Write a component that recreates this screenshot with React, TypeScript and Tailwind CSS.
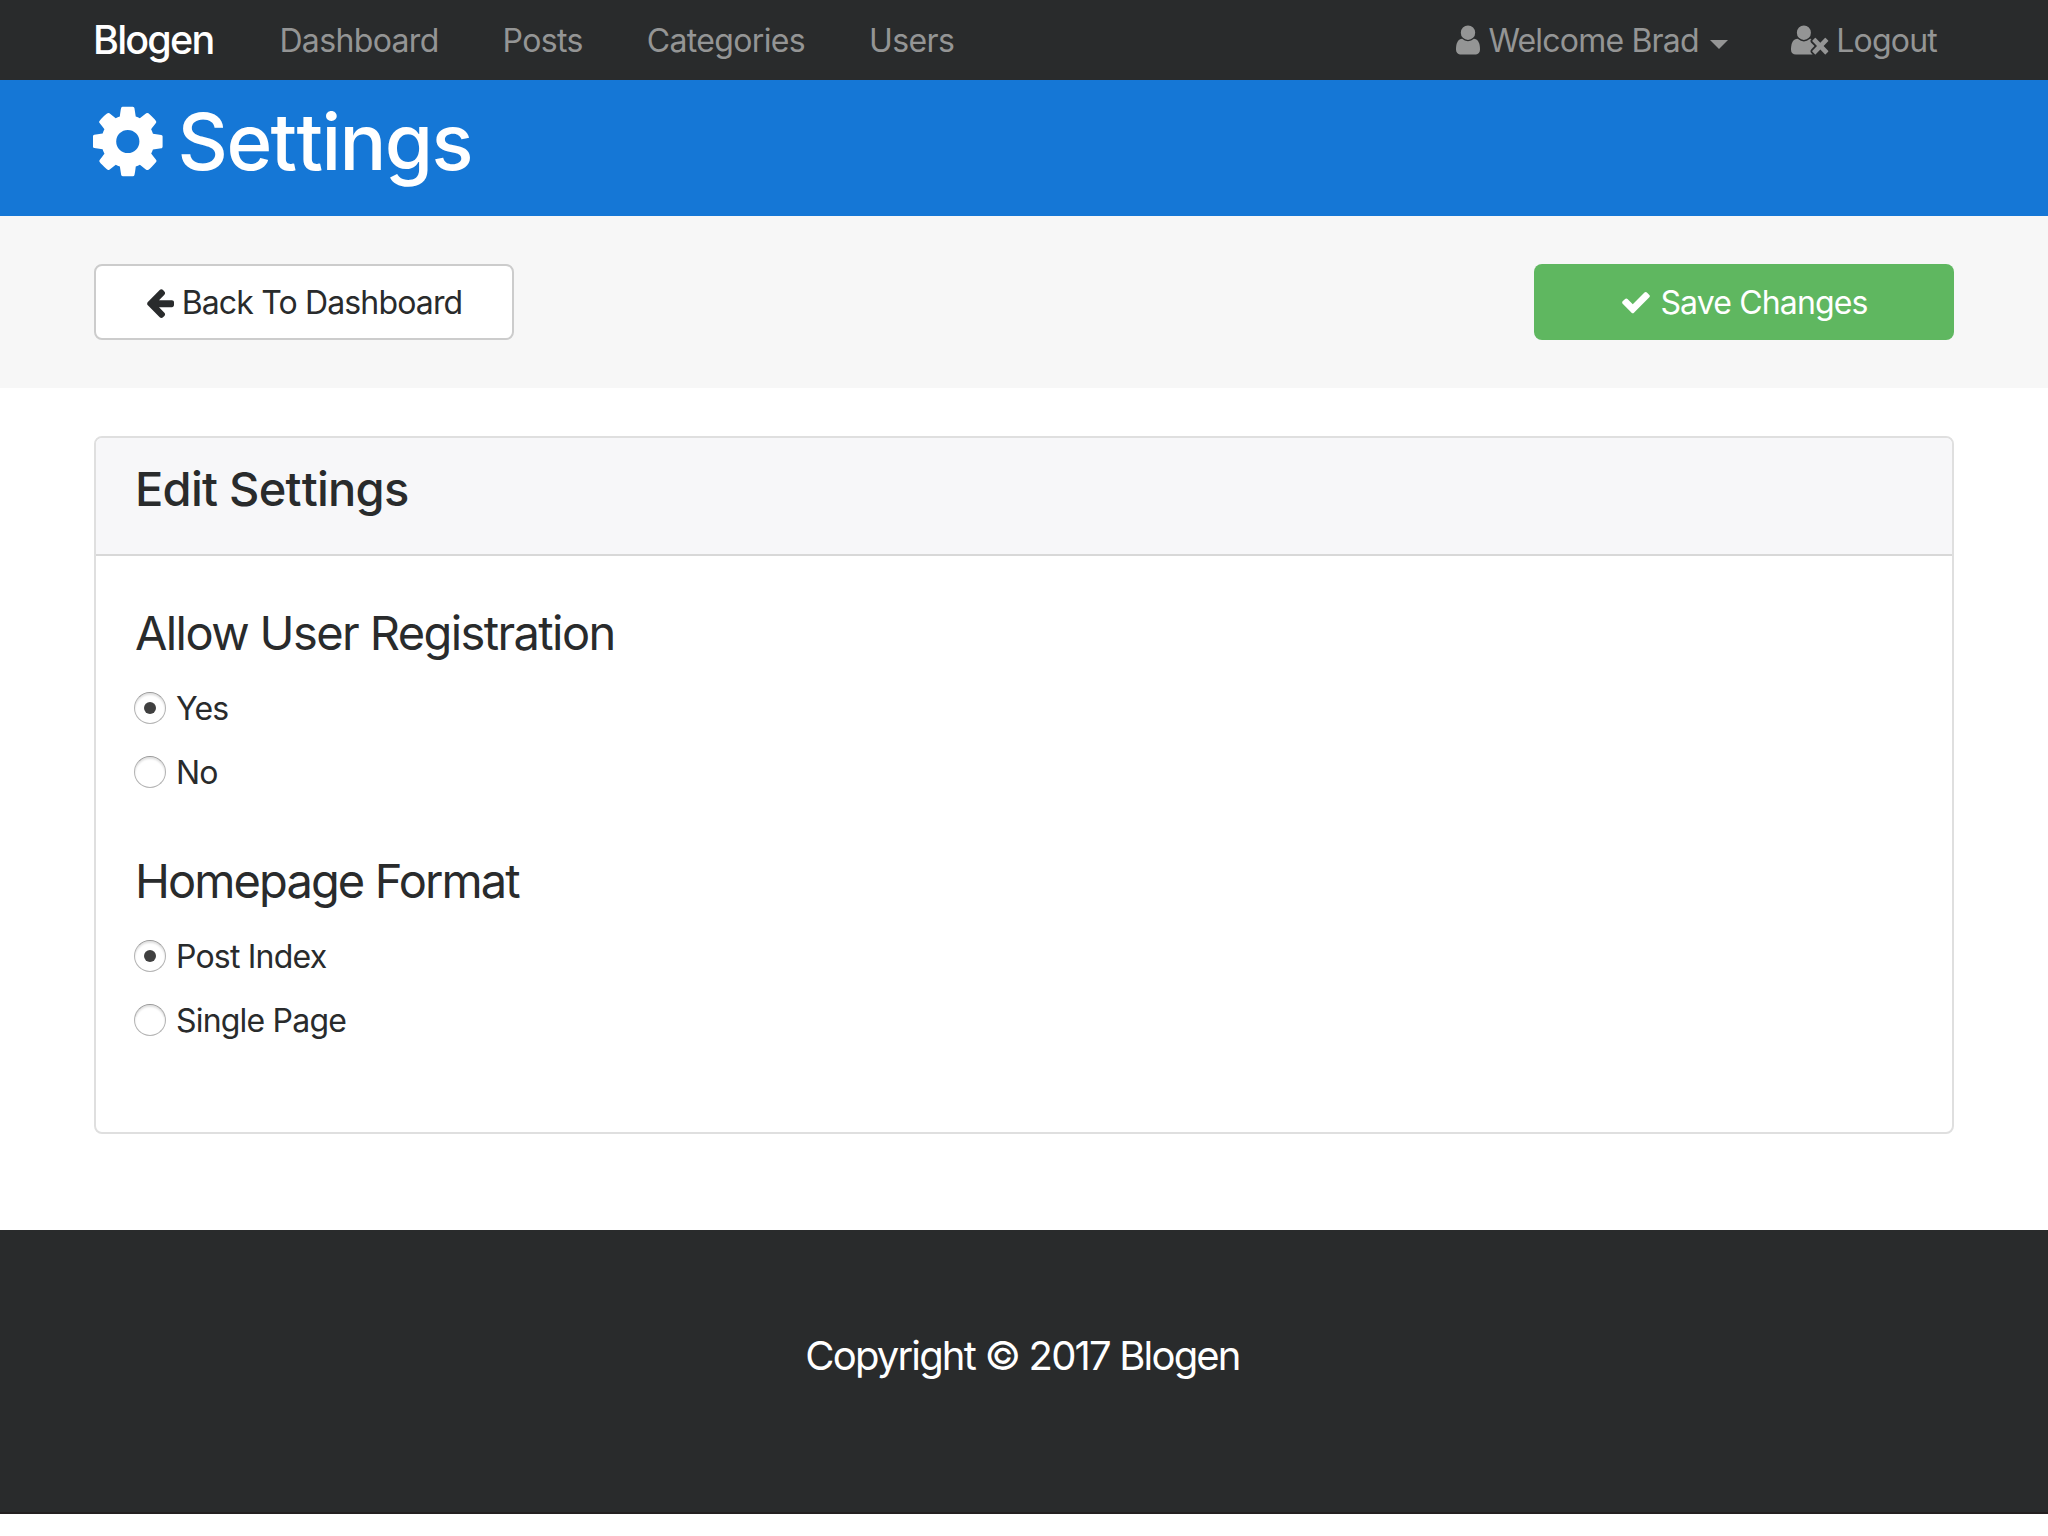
import React, { useState } from "react";

type GlyphProps = { d: string; advance: number; className: string };

/* Icon-font glyph: 1792 units per em, y axis pointing up, baseline at 0. */
function Glyph({ d, advance, className }: GlyphProps) {
  return (
    <svg
      viewBox={`0 -1536 ${advance} 1792`}
      preserveAspectRatio="none"
      fill="currentColor"
      aria-hidden="true"
      className={`inline-block shrink-0 overflow-visible ${className}`}
    >
      <path transform="scale(1 -1)" d={d} />
    </svg>
  );
}

const COG =
  "M1024 640q0 106 -75 181t-181 75t-181 -75t-75 -181t75 -181t181 -75t181 75t75 181zM1536 749v-222q0 -12 -8 -23t-20 -13l-185 -28q-19 -54 -39 -91q35 -50 107 -138q10 -12 10 -25t-9 -23q-27 -37 -99 -108t-94 -71q-12 0 -26 9l-138 108q-44 -23 -91 -38q-16 -136 -29 -186q-7 -28 -36 -28h-222q-14 0 -24.5 8.5t-11.5 21.5l-28 184q-49 16 -90 37l-141 -107q-10 -9 -25 -9q-14 0 -25 11q-126 114 -165 168q-7 10 -7 23q0 12 8 23q15 21 51 66.5t54 70.5q-27 50 -41 99l-183 27q-13 2 -21 12.5t-8 23.5v222q0 12 8 23t19 13l186 28q14 46 39 92q-40 57 -107 138q-10 12 -10 24q0 10 9 23q26 36 98.5 107.5t94.5 71.5q13 0 26 -10l138 -107q44 23 91 38q16 136 29 186q7 28 36 28h222q14 0 24.5 -8.5t11.5 -21.5l28 -184q49 -16 90 -37l142 107q9 9 24 9q13 0 25 -10q129 -119 165 -170q7 -8 7 -22q0 -12 -8 -23q-15 -21 -51 -66.5t-54 -70.5q26 -50 41 -98l183 -28q13 -2 21 -12.5t8 -23.5z";
const USER =
  "M1280 137q0 -109 -62.5 -187t-150.5 -78h-854q-88 0 -150.5 78t-62.5 187q0 85 8.5 160.5t31.5 152t58.5 131t94 89t134.5 34.5q131 -128 313 -128t313 128q76 0 134.5 -34.5t94 -89t58.5 -131t31.5 -152t8.5 -160.5zM1024 1024q0 -159 -112.5 -271.5t-271.5 -112.5t-271.5 112.5t-112.5 271.5t112.5 271.5t271.5 112.5t271.5 -112.5t112.5 -271.5z";
const USER_TIMES =
  "M704 640q-159 0 -271.5 112.5t-112.5 271.5t112.5 271.5t271.5 112.5t271.5 -112.5t112.5 -271.5t-112.5 -271.5t-271.5 -112.5zM1781 320l249 -249q9 -9 9 -23q0 -13 -9 -22l-136 -136q-9 -9 -22 -9q-14 0 -23 9l-249 249l-249 -249q-9 -9 -23 -9q-13 0 -22 9l-136 136q-9 9 -9 22q0 14 9 23l249 249l-249 249q-9 9 -9 23q0 13 9 22l136 136q9 9 22 9q14 0 23 -9l249 -249l249 249q9 9 23 9q13 0 22 -9l136 -136q9 -9 9 -22q0 -14 -9 -23zM1283 320l-181 -181q-37 -37 -37 -91q0 -53 37 -90l83 -83q-21 -3 -44 -3h-874q-121 0 -194 69t-73 190q0 53 3.5 103.5t14 109t26.5 108.5t43 97.5t62 81t85.5 53.5t111.5 20q19 0 39 -17q154 -122 319 -122t319 122q20 17 39 17q28 0 57 -6q-28 -27 -41 -50t-13 -56q0 -54 37 -91z";
const ARROW_LEFT =
  "M1536 640v-128q0 -53 -32.5 -90.5t-84.5 -37.5h-704l293 -294q38 -36 38 -90t-38 -90l-75 -76q-37 -37 -90 -37q-52 0 -91 37l-651 652q-37 37 -37 90q0 52 37 91l651 650q38 38 91 38q52 0 90 -38l75 -74q38 -38 38 -91t-38 -91l-293 -293h704q52 0 84.5 -37.5t32.5 -90.5z";
const CHECK =
  "M1671 970q0 -40 -28 -68l-724 -724l-136 -136q-28 -28 -68 -28t-68 28l-136 136l-362 362q-28 28 -28 68t28 68l136 136q28 28 68 28t68 -28l294 -295l656 657q28 28 68 28t68 -28l136 -136q28 -28 28 -68z";

function RadioRow({ label, checked, onSelect }: { label: string; checked: boolean; onSelect: () => void }) {
  return (
    <button type="button" role="radio" aria-checked={checked} onClick={onSelect} className="flex h-12 items-center text-left">
      <span className="flex size-8 items-center justify-center rounded-full border border-[#b4b4b4] border-t-[#999999] bg-white shadow-[inset_0_2px_2px_rgba(0,0,0,0.12)]">
        {checked && <span className="size-3 rounded-full bg-[#404040]" />}
      </span>
      <span className="ml-[10px] pt-[2px] text-[32px] leading-[46px] tracking-[-0.8px]">{label}</span>
    </button>
  );
}

function RadioGroup({ title, titleClass, options }: { title: string; titleClass: string; options: string[] }) {
  const [value, setValue] = useState(options[0]);
  return (
    <fieldset>
      <legend className={`-ml-px text-[47px] leading-[53px] ${titleClass}`}>{title}</legend>
      <div role="radiogroup" className="mt-[25px] -ml-[2px] flex flex-col gap-4">
        {options.map((o) => (
          <RadioRow key={o} label={o} checked={o === value} onSelect={() => setValue(o)} />
        ))}
      </div>
    </fieldset>
  );
}

export default function App() {
  return (
    <div className="min-h-[1536px] w-[2048px] bg-white font-[Inter,'Liberation_Sans',sans-serif] text-[#292b2c]">
      <nav className="flex h-20 items-center justify-between bg-[#292b2c] pr-[111px] pl-[93px] text-[32px] leading-[48px] whitespace-nowrap text-[#949595]">
        <div className="flex items-center gap-16">
          <a className="mr-[2px] text-[39.5px] leading-[60px] font-medium tracking-[-1.8px] text-white">Blogen</a>
          <a className="pt-[2px] tracking-[-0.65px]">Dashboard</a>
          <a className="pt-[2px] tracking-[-0.65px]">Posts</a>
          <a className="pt-[2px] tracking-[-0.65px]">Categories</a>
          <a className="pt-[2px] tracking-[-0.65px]">Users</a>
        </div>
        <div className="flex items-center gap-[63px]">
          <a className="flex items-center">
            <Glyph d={USER} advance={1280} className="h-[34px] w-[24px]" />
            <span className="ml-[8px] pt-[2px] tracking-[-0.8px]">Welcome Brad</span>
            <span className="mt-2 ml-[11px] border-x-[9px] border-t-[9px] border-x-transparent border-t-[#949595]" />
          </a>
          <a className="flex items-center">
            <Glyph d={USER_TIMES} advance={2048} className="h-[34px] w-[37.5px]" />
            <span className="ml-[8px] pt-[2px] tracking-[-0.8px]">Logout</span>
          </a>
        </div>
      </nav>

      <header className="flex h-[136px] items-start bg-[#1577d6] pt-[17px] pl-[93px] text-white">
        <h1 className="flex items-center text-[78px] leading-[88px] font-medium tracking-[-1.6px]">
          <Glyph d={COG} advance={1536} className="h-[81px] w-[69.6px]" />
          <span className="ml-[15px] pt-px">
            Set<span className="ml-px">tings</span>
          </span>
        </h1>
      </header>

      <section className="flex h-[172px] items-center justify-between bg-[#f7f7f7] px-[94px] text-[32px] whitespace-nowrap">
        <button className="flex h-[76px] w-[420px] items-center justify-center rounded-lg border-2 border-[#cccccc] bg-white tracking-[-0.85px]">
          <Glyph d={ARROW_LEFT} advance={1536} className="h-[33px] w-[28px]" />
          <span className="ml-[8px] pt-[2px]">Back To Dashboard</span>
        </button>
        <button className="flex h-[76px] w-[420px] items-center justify-center rounded-lg bg-[#5fb760] tracking-[-0.85px] text-white">
          <Glyph d={CHECK} advance={1792} className="h-8 w-8" />
          <span className="ml-[8px] pt-[2px]">Save Changes</span>
        </button>
      </section>

      <main className="px-[94px] pt-12 pb-24">
        <div className="h-[698px] overflow-hidden rounded-lg border-2 border-[#dfdfdf]">
          <div className="h-[118px] border-b-2 border-[#d8d8d8] bg-[#f7f7f9] px-[39px] pt-[24px]">
            <h4 className="text-[47px] leading-[53px] font-medium tracking-[-0.75px]">
              Edit Set<span className="ml-px">tings</span>
            </h4>
          </div>
          <form className="flex flex-col gap-[58px] px-10 pt-[50px]">
            <RadioGroup title="Allow User Registration" titleClass="tracking-[-1.6px]" options={["Yes", "No"]} />
            <RadioGroup title="Homepage Format" titleClass="tracking-[-1.9px]" options={["Post Index", "Single Page"]} />
          </form>
        </div>
      </main>

      <footer className="flex h-[284px] items-start justify-center border-b-2 border-[#231f20] bg-[#292b2c] pt-[96px] pr-[3px] text-white">
        <p className="text-[40px] leading-[60px] tracking-[-1.82px]">Copyright © 2017 Blogen</p>
      </footer>
    </div>
  );
}
